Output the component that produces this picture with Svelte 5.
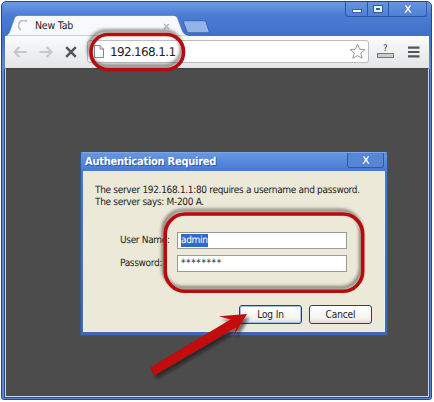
<script lang="ts">
    let address = $state("192.168.1.1");
    let server = "192.168.1.1:80";
    let realm = "M-200 A";
    let fields = [
        { label: "User Name:", value: "admin", selected: true },
        { label: "Password:", value: "********", selected: false },
    ];
</script>

{#snippet closeGlyph()}
    <svg width="10" height="10" viewBox="0 0 10 10">
        <path d="M1 .8h2.400L5 3.100 6.600.8H9L6.400 4.800 9.300 9.200H6.800L5 6.600 3.200 9.200H.7L3.600 4.800z" fill="#f4f8ff" stroke="#28569c" stroke-width=".5" />
    </svg>
{/snippet}

<div class="desktop">
    <div class="window">
        <header class="titlebar">
            <div class="tabs">
                <div class="tab">
                    <svg class="tab-shape" width="184" height="21" viewBox="0 0 184 21">
                        <path d="M0 21C4 20 4.500 17 6 13L9.500 3Q10.500.5 13 .5H169Q171.500.5 172.500 3L177 15Q178.500 20 184 20.500V21z" fill="#f8f9fa" stroke="#4a6eae" stroke-width=".6" />
                    </svg>
                    <svg class="spinner" width="12" height="12" viewBox="0 0 12 12">
                        <path d="M2.700 10A5 5 0 0 1 8.800 1.400" fill="none" stroke="#b9bcc1" stroke-width="1.700" />
                    </svg>
                    <span class="tab-title">New Tab</span>
                    <svg class="tab-close" width="7" height="7" viewBox="0 0 7 7">
                        <path d="M1 1l5 5M6 1L1 6" stroke="#b5b5b5" stroke-width="1.200" />
                    </svg>
                </div>
                <svg class="new-tab" width="29" height="14" viewBox="0 0 29 14">
                    <path d="M3 .7H22Q23.500.7 24 2L27 11Q27.500 12.800 26 12.800H7Q5.500 12.800 5 11.500L1.500 2.500Q1 .7 3 .7z" fill="#94b4e9" stroke="#3c65b2" />
                </svg>
            </div>
            <div class="controls">
                <span class="min"><i></i></span>
                <span class="max"><i></i></span>
                <span class="close">{@render closeGlyph()}</span>
            </div>
        </header>

        <div class="toolbar">
            <svg width="14" height="12" viewBox="0 0 14 12">
                <path d="M13.500 6H2M6.500 1L1.500 6l5 5" fill="none" stroke="#c8c8c8" stroke-width="2.200" />
            </svg>
            <svg class="forward" width="14" height="12" viewBox="0 0 14 12">
                <path d="M.5 6H12M7.500 1l5 5-5 5" fill="none" stroke="#c8c8c8" stroke-width="2.200" />
            </svg>
            <svg class="stop" width="12" height="12" viewBox="0 0 12 12">
                <path d="M1.200 1.200l9.600 9.600M10.800 1.200l-9.600 9.600" stroke="#555" stroke-width="2.500" />
            </svg>
            <div class="omnibox">
                <svg width="10" height="13" viewBox="0 0 10 13">
                    <path d="M.5.500H6L9.500 4v8.500H.5zM6 .5V4h3.500" fill="#fff" stroke="#85858a" />
                </svg>
                <span class="address">{address}</span>
                <svg class="star" width="17" height="17" viewBox="0 0 17 17">
                    <path d="M8.500 1.200l2.100 5 5.300.4-4.100 3.500 1.300 5.200-4.600-2.800-4.600 2.800 1.300-5.200L1.100 6.600l5.300-.4z" fill="#fff" stroke="#969696" stroke-linejoin="round" />
                </svg>
            </div>
            <div class="extension">
                <span>?</span>
                <i></i>
            </div>
            <svg class="menu" width="12" height="12" viewBox="0 0 12 12">
                <path d="M0 1.700h11.500M0 6h11.500M0 10.300h11.500" stroke="#555" stroke-width="2.200" />
            </svg>
        </div>

        <main class="page">
            <section class="dialog">
                <header class="dialog-title">
                    <span>Authentication Required</span>
                    <div class="dialog-close">{@render closeGlyph()}</div>
                </header>
                <div class="dialog-body">
                    <p>The server {server} requires a username and password.</p>
                    <p>The server says: {realm}.</p>
                    <div class="fields">
                        {#each fields as field}
                            <span class="label">{field.label}</span>
                            <div class="input">
                                <span class:selected={field.selected} class:masked={!field.selected}>{field.value}</span>
                            </div>
                        {/each}
                    </div>
                    <div class="buttons">
                        <button class="primary">Log In</button>
                        <button>Cancel</button>
                    </div>
                </div>
            </section>
        </main>
    </div>

    <svg class="marks" width="434" height="402" viewBox="0 0 434 402">
        <defs>
            <filter id="shadow" x="-20%" y="-20%" width="140%" height="140%">
                <feDropShadow dx="-2" dy="-3.500" stdDeviation="1.600" flood-color="#333" flood-opacity=".55" />
            </filter>
            <filter id="arrow-shadow" x="-20%" y="-20%" width="140%" height="150%">
                <feDropShadow dx="2.500" dy="3.500" stdDeviation="1.600" flood-color="#111" flood-opacity=".6" />
            </filter>
        </defs>
        <g fill="none" stroke="#b5090f" stroke-width="3.600">
            <rect x="91" y="34.500" width="92.500" height="35" rx="17" filter="url(#shadow)" />
            <rect x="165.200" y="214" width="197.500" height="77.300" rx="20" filter="url(#shadow)" />
        </g>
        <path d="M247 314L219 316.200l11.500 3.300L150.500 367.500l4 7.800L236 327.500l-2.500 8.500z" fill="#c3070b" filter="url(#arrow-shadow)" />
    </svg>
</div>

<style>
    :global(body) {
        background: #fff;
    }

    .desktop {
        position: relative;
        box-sizing: border-box;
        width: 434px;
        height: 402px;
        padding: 1px 2px 2px 1px;
        overflow: hidden;
        font-family: "DejaVu Sans Condensed", "DejaVu Sans", sans-serif;
        font-stretch: condensed;
        text-rendering: geometricPrecision;
        color: #222;
    }

    .window {
        display: flex;
        flex-direction: column;
        box-sizing: border-box;
        height: 399px;
        padding: 0 2px 2px 3px;
        border: 1px solid #29477f;
        border-radius: 5px 5px 3px 3px;
        background: linear-gradient(#6c9ae4, #4b7dd5 13px, #3e70c9 34px, #5f86c6 60px);
    }

    .titlebar {
        display: flex;
        justify-content: space-between;
        height: 34px;
        flex: none;
    }

    .tabs {
        display: flex;
        align-items: flex-end;
    }

    .tab {
        position: relative;
        display: flex;
        align-items: center;
        box-sizing: border-box;
        width: 177px;
        height: 20px;
        padding: 0 12px 0 13px;
    }

    .tab-shape {
        position: absolute;
        left: 0;
        bottom: 0;
    }

    .spinner,
    .tab-title,
    .tab-close {
        position: relative;
    }

    .tab-title {
        margin-left: 5px;
        font-size: 10.5px;
        letter-spacing: -0.2px;
        line-height: 20px;
    }

    .tab-close {
        margin-left: auto;
    }

    .new-tab {
        margin: 0 0 2px;
    }

    .controls {
        display: flex;
        height: 14px;
        margin-right: 2px;
        border: 1px solid #2d579f;
        border-top: 0;
        border-radius: 0 0 3px 3px;
        background: linear-gradient(#6795de, #4e7fd3);

        & span {
            display: flex;
            align-items: center;
            justify-content: center;
            box-sizing: border-box;
            width: 22px;
            border-right: 1px solid #2d579f;
        }

        & .max {
            width: 21px;
        }

        & .close {
            width: 37px;
            border: 0;
        }

        & .min i {
            width: 8px;
            height: 2px;
            margin-top: 3px;
            border: 1px solid #3262b0;
            background: #fff;
        }

        & .max i {
            width: 4px;
            height: 2px;
            border: 2px solid #e7f1ff;
            outline: 1px solid #2f5a9f;
            background: #355f9f;
        }
    }

    .toolbar {
        display: flex;
        align-items: center;
        height: 32px;
        flex: none;
        box-sizing: border-box;
        padding: 0 0 1px 8px;
        background: linear-gradient(#fafbfb, #e4e5e7);

        & .forward {
            margin-left: 12px;
        }

        & .stop {
            margin-left: 12px;
        }
    }

    .omnibox {
        display: flex;
        align-items: center;
        box-sizing: border-box;
        width: 282px;
        height: 23px;
        margin-left: 10px;
        padding: 0 2px 0 6px;
        border: 1px solid #bbbcc0;
        border-radius: 3px;
        background: #fff;

        & .star {
            margin-left: auto;
        }
    }

    .address {
        margin-left: 6px;
        font-family: "DejaVu Sans", sans-serif;
        font-stretch: normal;
        font-size: 12px;
        letter-spacing: -0.65px;
        line-height: 16px;
    }

    .extension {
        display: flex;
        flex-direction: column;
        align-items: center;
        width: 17px;
        margin-left: 8px;

        & span {
            font-size: 9px;
            line-height: 8px;
        }

        & i {
            box-sizing: border-box;
            width: 17px;
            height: 5px;
            border: 1px solid #777;
            background: #ccc;
        }
    }

    .menu {
        margin-left: 14px;
    }

    .page {
        flex: 1;
        border: 1px solid #c3d6f2;
        border-top-color: #414141;
        background: #4c4c4c;
        box-shadow: 0 1px #2c4a8c, 1px 1px #2c4a8c, -1px 1px #2c4a8c;
    }

    .dialog {
        box-sizing: border-box;
        width: 308px;
        height: 184px;
        margin: 83px 0 0 74px;
        padding: 0 2px 3px;
        border: 1px solid #36568f;
        border-top-color: #7da6e8;
        border-radius: 3px 3px 0 0;
        background: linear-gradient(#6797e3, #4479d2 19px, #4068b2);
    }

    .dialog-title {
        display: flex;
        justify-content: space-between;
        height: 18px;
        padding: 0 1px 0 2px;
        font-size: 11px;
        font-weight: bold;
        letter-spacing: -0.25px;
        line-height: 18px;
        color: #fff;
        text-shadow: 1px 1px #2c569d;

        & span {
            white-space: nowrap;
        }
    }

    .dialog-close {
        display: flex;
        align-items: center;
        justify-content: center;
        width: 35px;
        height: 14px;
        border: 1px solid #2f5aa4;
        border-top: 0;
        border-radius: 0 0 3px 3px;
        background: #5786d6;
    }

    .dialog-body {
        box-sizing: border-box;
        height: 161px;
        padding: 13px 12px 0 11px;
        border: 1px solid #e7eef5;
        background: #ece9d8;
        font-size: 10px;
        letter-spacing: -0.32px;

        & p {
            margin: 0;
            line-height: 11.5px;
            white-space: nowrap;
        }
    }

    .fields {
        display: grid;
        grid-template-columns: 57px 170px;
        row-gap: 6px;
        margin: 24px 0 0 25px;
    }

    .label {
        line-height: 18px;
        height: 17px;
        white-space: nowrap;
    }

    .input {
        display: flex;
        align-items: center;
        box-sizing: border-box;
        height: 17px;
        padding: 0 3px;
        border: 1px solid #9a9b98;
        background: #fff;

        & .selected {
            height: 13px;
            line-height: 13px;
            background: #316ac5;
            color: #fff;
        }
    }

    .masked {
        letter-spacing: 0.6px;
    }

    .buttons {
        display: flex;
        justify-content: flex-end;
        gap: 7px;
        margin-top: 33px;

        & button {
            box-sizing: border-box;
            width: 63px;
            height: 19px;
            padding: 0;
            border: 1px solid #29435f;
            border-radius: 3px;
            background: linear-gradient(#fff, #f3f3ef 75%, #dcdad0);
            font: inherit;
            letter-spacing: -0.1px;
            color: #222;
        }

        & .primary {
            box-shadow: inset 0 0 0 1px #a3c2ed;
        }
    }

    .marks {
        position: absolute;
        inset: 0;
        pointer-events: none;
    }
</style>
